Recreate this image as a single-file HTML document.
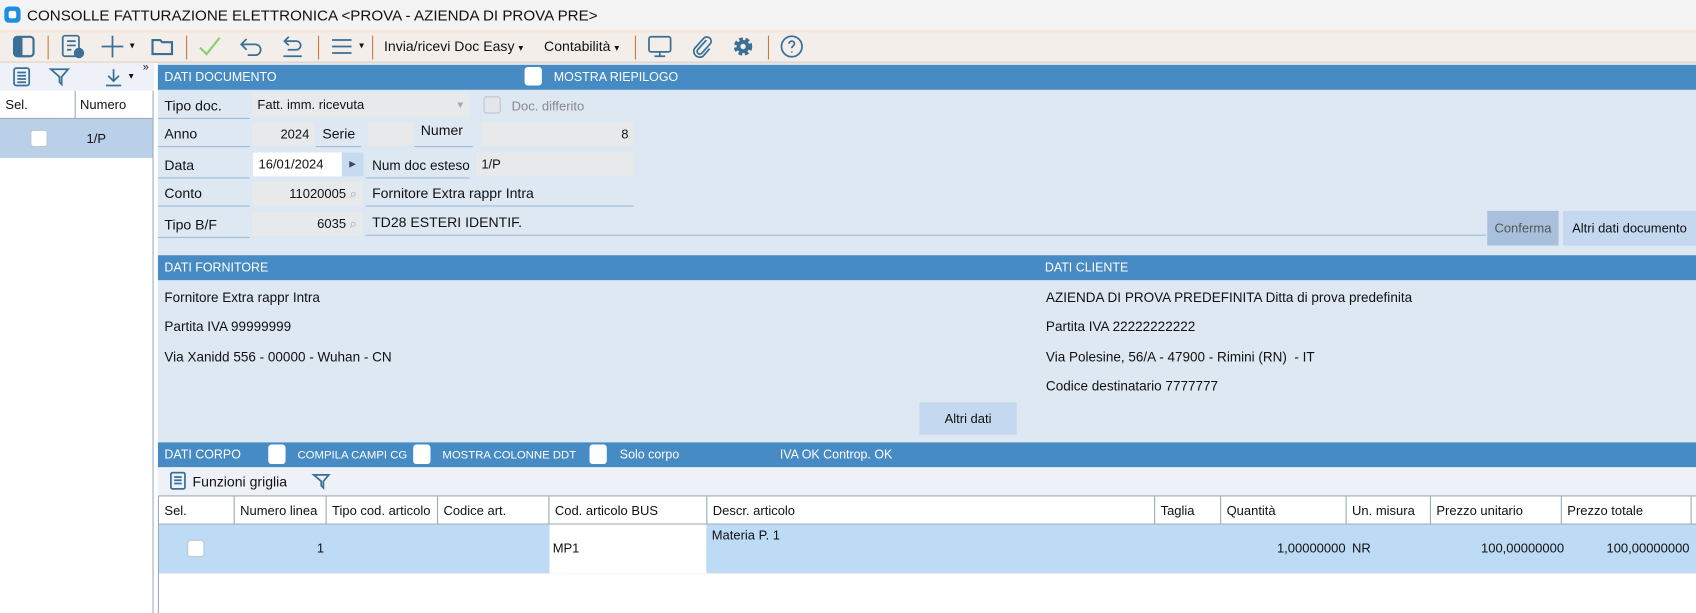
<!DOCTYPE html>
<html><head><meta charset="utf-8"><style>
*{box-sizing:border-box;margin:0;padding:0}
body{width:1696px;height:613px;overflow:hidden;background:#fff;font-family:"Liberation Sans","DejaVu Sans",sans-serif;font-size:12.5px;color:#111;position:relative}
#w{position:absolute;left:0;top:0;width:1568px;height:567px;transform:scale(1.08163);transform-origin:0 0}
.a{position:absolute;white-space:nowrap}
.bar{position:absolute;background:#468bc3;color:#fff;font-size:11.5px;height:23px;line-height:25px}
.lbl{position:absolute;height:24px;line-height:24px;padding-left:6px;border-bottom:1px solid #9fbbd8;font-size:13px;white-space:nowrap;overflow:hidden}
.fld{position:absolute;height:22px;line-height:22px;background:#e8e9ea;font-size:12px;padding:0 5px;white-space:nowrap}
.cb{position:absolute;width:16px;height:16px;background:#fff;border:1px solid #bcc7d2;border-radius:3px}
.ic{position:absolute;stroke:#3a6f96;fill:none;stroke-width:1.6}
.sep{position:absolute;top:33px;width:1px;height:22px;background:#c87a3a}
.th{position:absolute;top:0;height:26px;line-height:26px;padding-left:5px;border-right:1px solid #9aa9b8;font-size:12px;white-space:nowrap;overflow:hidden}
</style></head><body><div id="w">
<div class="a" style="left:0;top:0;width:1568px;height:28px;background:#f3f3f3"></div>
<div class="a" style="left:4px;top:6px;width:15px;height:15px;background:#1e8fe0;border-radius:4px"><div style="position:absolute;left:4px;top:4px;width:7px;height:7px;background:#fff;border-radius:2px"></div></div>
<div class="a" style="left:25px;top:6px;font-size:14px">CONSOLLE FATTURAZIONE ELETTRONICA &lt;PROVA - AZIENDA DI PROVA PRE&gt;</div>
<div class="a" style="left:0;top:28px;width:1568px;height:30px;background:#f3eeea;border-top:2px solid #fbe3d0;border-bottom:1px solid #e0c7b3"></div>
<svg class="ic" style="left:10px;top:31px" width="24" height="24"><rect x="3" y="3" width="18" height="18" rx="3" stroke-width="2"/><rect x="4" y="4" width="6" height="16" fill="#3a6f96"/></svg>
<div class="sep" style="left:44px"></div>
<svg class="ic" style="left:55px;top:31px" width="24" height="24"><rect x="3" y="2" width="15" height="19" rx="2"/><path d="M7 7h8M7 11h8M7 15h4"/><circle cx="18" cy="18" r="4" fill="#3a6f96"/></svg>
<svg class="ic" style="left:92px;top:31px" width="24" height="24"><path d="M12 2v20M2 12h20"/></svg>
<div class="a" style="left:120px;top:37px;font-size:9px">▾</div>
<svg class="ic" style="left:138px;top:31px" width="24" height="24"><path d="M3 6h7l2 2h9v11H3z" stroke-width="2"/></svg>
<div class="sep" style="left:172px"></div>
<svg class="ic" style="left:182px;top:31px;stroke:#8fce6a" width="24" height="24"><path d="M3 13l6 6L21 4" stroke-width="2"/></svg>
<svg class="ic" style="left:220px;top:31px" width="24" height="24"><path d="M8 5L3 10l5 5M3 10h13a5 5 0 010 10H9"/></svg>
<svg class="ic" style="left:258px;top:31px" width="24" height="24"><path d="M9 3L5 7l4 4M5 7h11a4 4 0 010 8H8M4 21h17"/></svg>
<div class="sep" style="left:294px"></div>
<svg class="ic" style="left:304px;top:31px" width="24" height="24"><path d="M3 6h18M3 12h18M3 18h18"/></svg>
<div class="a" style="left:332px;top:37px;font-size:9px">▾</div>
<div class="sep" style="left:344px"></div>
<div class="a" style="left:355px;top:35px;font-size:13px">Invia/ricevi Doc Easy <span style="font-size:9px">▾</span></div>
<div class="a" style="left:503px;top:35px;font-size:13px">Contabilità <span style="font-size:9px">▾</span></div>
<div class="sep" style="left:587px"></div>
<svg class="ic" style="left:597px;top:31px" width="26" height="24"><rect x="3" y="3" width="20" height="14" rx="2"/><path d="M13 17v4M8 21h10"/></svg>
<svg class="ic" style="left:637px;top:31px" width="24" height="24"><path d="M16 6l-8 9a2.5 2.5 0 004 3l8-9a4 4 0 00-6-5L5 14a5.5 5.5 0 008 7l6-7"/></svg>
<svg class="ic" style="left:675px;top:31px" width="24" height="24"><circle cx="12" cy="12" r="6" stroke-width="5" stroke-dasharray="3 2"/><circle cx="12" cy="12" r="6" fill="#3a6f96" stroke="none"/><circle cx="12" cy="12" r="2.5" fill="#f3eeea" stroke="none"/></svg>
<div class="sep" style="left:710px"></div>
<svg class="ic" style="left:720px;top:31px" width="24" height="24"><circle cx="12" cy="12" r="9.5"/><path d="M9.5 9.5a2.5 2.5 0 115 0c0 2-2.5 2-2.5 4M12 16.5v1"/></svg>
<div class="a" style="left:0;top:58px;width:142px;height:509px;border-right:1px solid #9aabbd;background:#fff"></div>
<div class="a" style="left:0;top:58px;width:142px;height:26px;background:#eef2f8"></div>
<svg class="ic" style="left:10px;top:61px" width="20" height="20"><rect x="3" y="2" width="14" height="16" rx="2"/><path d="M6 6h8M6 9h8M6 12h8M6 15h8"/></svg>
<svg class="ic" style="left:45px;top:61px" width="20" height="20"><path d="M2 3h16l-6 7v7l-2-2v-5z"/></svg>
<svg class="ic" style="left:95px;top:61px" width="20" height="20"><path d="M10 3v11M5 9l5 5 5-5M3 18h14"/></svg>
<div class="a" style="left:119px;top:65px;font-size:9px">▾</div>
<div class="a" style="left:132px;top:57px;font-size:10px">»</div>
<div class="a" style="left:0;top:84px;width:141px;height:26px;border-bottom:1px solid #9aabbd;background:#fff"></div>
<div class="a" style="left:69px;top:84px;width:1px;height:26px;background:#9aabbd"></div>
<div class="a" style="left:5px;top:90px;font-size:12px">Sel.</div>
<div class="a" style="left:74px;top:90px;font-size:12px">Numero</div>
<div class="a" style="left:0;top:110px;width:141px;height:36px;background:#b9d0e8"></div>
<div class="cb" style="left:28px;top:120px"></div>
<div class="a" style="left:80px;top:121px;font-size:12px">1/P</div>
<div class="a" style="left:146px;top:58px;width:1422px;height:351px;background:#dde8f2"></div>
<div class="bar" style="left:146px;top:60px;width:1422px;padding-left:6px">DATI DOCUMENTO</div>
<div class="cb" style="left:485px;top:62px;width:16px;height:17px;border:none"></div>
<div class="a" style="left:512px;top:66px;color:#fff;font-size:11.5px">MOSTRA RIEPILOGO</div>
<div class="lbl" style="left:146px;top:86px;width:85px">Tipo doc.</div>
<div class="fld" style="left:233px;top:86px;width:202px">Fatt. imm. ricevuta<span style="float:right;color:#aaa;font-size:9px">▼</span></div>
<div class="cb" style="left:447px;top:89px;background:#e3e6ea"></div>
<div class="a" style="left:473px;top:91px;color:#888;font-size:12px">Doc. differito</div>
<div class="lbl" style="left:146px;top:112px;width:85px">Anno</div>
<div class="fld" style="left:233px;top:113px;width:58px;text-align:right">2024</div>
<div class="lbl" style="left:292px;top:112px;width:42px">Serie</div>
<div class="fld" style="left:340px;top:113px;width:42px"></div>
<div class="lbl" style="left:383px;top:108px;width:54px;height:28px;line-height:26px">Numer</div>
<div class="fld" style="left:445px;top:113px;width:141px;text-align:right">8</div>
<div class="lbl" style="left:146px;top:141px;width:85px">Data</div>
<div class="fld" style="left:234px;top:141px;width:88px;background:#fff">16/01/2024</div>
<div class="fld" style="left:316px;top:141px;width:20px;background:#c6daf0;font-size:8px;text-align:center;color:#446">▶</div>
<div class="lbl" style="left:338px;top:141px;width:96px;font-size:12.5px">Num doc esteso</div>
<div class="fld" style="left:440px;top:141px;width:146px">1/P</div>
<div class="lbl" style="left:146px;top:167px;width:85px">Conto</div>
<div class="fld" style="left:233px;top:168px;width:102px;text-align:right">11020005 <span style="color:#aaa">⌕</span></div>
<div class="lbl" style="left:338px;top:167px;width:248px">Fornitore Extra rappr Intra</div>
<div class="lbl" style="left:146px;top:196px;width:85px">Tipo B/F</div>
<div class="fld" style="left:233px;top:196px;width:102px;text-align:right">6035 <span style="color:#aaa">⌕</span></div>
<div class="lbl" style="left:338px;top:194px;width:1036px">TD28 ESTERI IDENTIF.</div>
<div class="a" style="left:1375px;top:195px;width:66px;height:32px;line-height:32px;background:#a8c0dc;color:#555;font-size:12px;text-align:center">Conferma</div>
<div class="a" style="left:1445px;top:195px;width:123px;height:32px;line-height:32px;background:#c4d9f0;font-size:12px;text-align:center">Altri dati documento</div>
<div class="bar" style="left:146px;top:236px;width:1422px;padding-left:6px">DATI FORNITORE<span style="position:absolute;left:820px">DATI CLIENTE</span></div>
<div class="a" style="left:152px;top:268px">Fornitore Extra rappr Intra</div>
<div class="a" style="left:152px;top:295px">Partita IVA 99999999</div>
<div class="a" style="left:152px;top:323px">Via Xanidd 556 - 00000 - Wuhan - CN</div>
<div class="a" style="left:967px;top:268px">AZIENDA DI PROVA PREDEFINITA Ditta di prova predefinita</div>
<div class="a" style="left:967px;top:295px">Partita IVA 22222222222</div>
<div class="a" style="left:967px;top:323px">Via Polesine, 56/A - 47900 - Rimini (RN)&nbsp; - IT</div>
<div class="a" style="left:967px;top:350px">Codice destinatario 7777777</div>
<div class="a" style="left:850px;top:372px;width:90px;height:30px;line-height:30px;background:#c4d9f0;font-size:12px;text-align:center">Altri dati</div>
<div class="bar" style="left:146px;top:409px;width:1422px;padding-left:6px">DATI CORPO</div>
<div class="cb" style="left:248px;top:411px;height:18px;border:none"></div>
<div class="a" style="left:275px;top:415px;color:#fff;font-size:10.5px">COMPILA CAMPI CG</div>
<div class="cb" style="left:382px;top:411px;height:18px;border:none"></div>
<div class="a" style="left:409px;top:415px;color:#fff;font-size:10.5px">MOSTRA COLONNE DDT</div>
<div class="cb" style="left:545px;top:411px;height:18px;border:none"></div>
<div class="a" style="left:573px;top:415px;color:#fff;font-size:11.5px">Solo corpo</div>
<div class="a" style="left:721px;top:415px;color:#fff;font-size:11.5px">IVA OK Controp. OK</div>
<div class="a" style="left:146px;top:432px;width:1422px;height:26px;background:#eef2f8"></div>
<svg class="ic" style="left:156px;top:436px" width="18" height="18"><rect x="2" y="1" width="13" height="15" rx="1.5"/><path d="M5 5h7M5 8h7M5 11h7"/></svg>
<div class="a" style="left:178px;top:438px;font-size:13px">Funzioni griglia</div>
<svg class="ic" style="left:288px;top:436px" width="18" height="18"><path d="M2 3h14l-5 6v6l-2-2V9z"/></svg>
<div class="a" style="left:146px;top:458px;width:1422px;height:109px;border-left:1px solid #9aabbd;background:#fff"></div>
<div class="a" style="left:147px;top:458px;width:1421px;height:27px;border-bottom:1px solid #9aa9b8;border-top:1px solid #9aa9b8">
<div class="th" style="left:0;width:70px">Sel.</div>
<div class="th" style="left:70px;width:85px">Numero linea</div>
<div class="th" style="left:155px;width:103px">Tipo cod. articolo</div>
<div class="th" style="left:258px;width:103px">Codice art.</div>
<div class="th" style="left:361px;width:146px">Cod. articolo BUS</div>
<div class="th" style="left:507px;width:414px">Descr. articolo</div>
<div class="th" style="left:921px;width:61px">Taglia</div>
<div class="th" style="left:982px;width:116px">Quantità</div>
<div class="th" style="left:1098px;width:78px">Un. misura</div>
<div class="th" style="left:1176px;width:121px">Prezzo unitario</div>
<div class="th" style="left:1297px;width:120px">Prezzo totale</div>
</div>
<div class="a" style="left:147px;top:485px;width:1421px;height:45px;background:#bddbf5;border-bottom:1px solid #c8d6e4"></div>
<div class="a" style="left:508px;top:485px;width:145px;height:45px;background:#fff"></div>
<div class="cb" style="left:173px;top:499px"></div>
<div class="a" style="left:293px;top:500px;font-size:12px">1</div>
<div class="a" style="left:511px;top:500px;font-size:12px">MP1</div>
<div class="a" style="left:658px;top:488px;font-size:12px">Materia P. 1</div>
<div class="a" style="left:1180px;top:500px;font-size:12px;width:64px;text-align:right">1,00000000</div>
<div class="a" style="left:1250px;top:500px;font-size:12px">NR</div>
<div class="a" style="left:1366px;top:500px;font-size:12px;width:80px;text-align:right">100,00000000</div>
<div class="a" style="left:1482px;top:500px;font-size:12px;width:80px;text-align:right">100,00000000</div>
</div></body></html>
